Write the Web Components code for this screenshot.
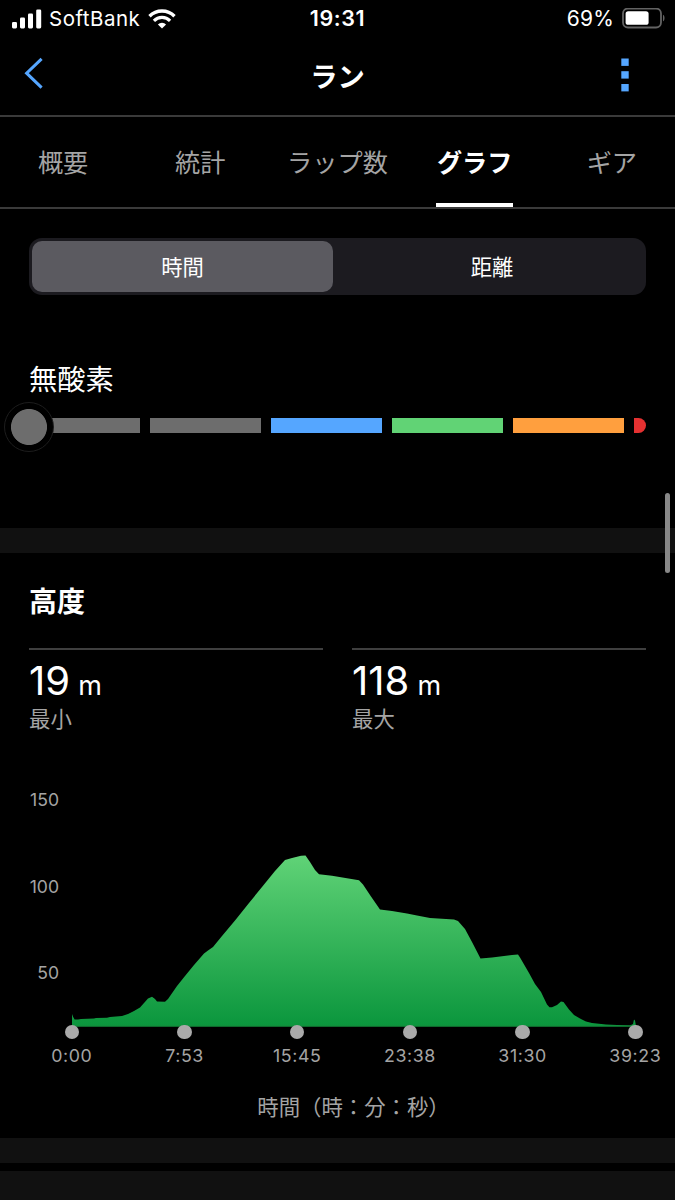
<!DOCTYPE html>
<html lang="ja">
<head>
<meta charset="utf-8">
<meta name="viewport" content="width=device-width, initial-scale=1">
<title>ラン</title>
<style>
  :root{
    --bg:#000;
    --text:#fff;
    --muted:#a4a4a4;
    --line:#3a3a3a;
    --band:#111;
    --accent:#55a6ff;
  }
  html,body{ margin:0; background:var(--bg); }
  body{
    width:675px; height:1200px; overflow:hidden; position:relative;
    color:var(--text);
    font-family:Inter, "Noto Sans CJK JP", sans-serif;
  }
</style>
</head>
<body>
  <run-screen>
    <status-bar carrier="SoftBank" time="19:31" battery="69"></status-bar>
    <nav-header>ラン</nav-header>
    <tab-bar>
      <tab-item>概要</tab-item>
      <tab-item>統計</tab-item>
      <tab-item>ラップ数</tab-item>
      <tab-item active>グラフ</tab-item>
      <tab-item>ギア</tab-item>
    </tab-bar>
    <segment-control>
      <segment-option selected>時間</segment-option>
      <segment-option>距離</segment-option>
    </segment-control>
    <effect-gauge>無酸素</effect-gauge>
    <section-band></section-band>
    <chart-section heading="高度">
      <stat-cell slot="stats" value="19" unit="m">最小</stat-cell>
      <stat-cell slot="stats" value="118" unit="m">最大</stat-cell>
      <elevation-chart>時間（時：分：秒）</elevation-chart>
    </chart-section>
    <section-band></section-band>
    <section-band class="next"></section-band>
  </run-screen>
  <scroll-thumb></scroll-thumb>

<script>
(function () {
  // small helper: register an element with an open shadow root
  function define(name, html, setup) {
    const tpl = document.createElement('template');
    tpl.innerHTML = html;
    customElements.define(name, class extends HTMLElement {
      constructor() {
        super();
        this.attachShadow({ mode: 'open' }).appendChild(tpl.content.cloneNode(true));
      }
      connectedCallback() {
        if (setup) setup(this, this.shadowRoot);
      }
    });
  }

  define('run-screen', `
    <style>
      :host{ display:flex; flex-direction:column; height:1200px; }
      ::slotted(*){ flex:none; }
      ::slotted(.next){ margin-top:8px; height:29px; }
    </style>
    <slot></slot>
  `);

  define('status-bar', `
    <style>
      :host{ display:grid; grid-template-columns:1fr auto 1fr; align-items:center; height:37px; font-size:20.5px; line-height:37px; }
      .left,.right{ display:flex; align-items:center; }
      .left{ padding-left:12px; }
      .right{ justify-content:flex-end; padding-right:10px; }
      .carrier{ margin:0 8px 0 7px; letter-spacing:.5px; }
      .time{ font-weight:600; font-size:21.5px; letter-spacing:.6px; }
      .pct{ margin-right:8px; font-size:21px; letter-spacing:.2px; }
      svg{ display:block; }
    </style>
    <div class="left">
      <svg width="30" height="20" viewBox="0 0 30 20" fill="#fff">
        <rect x="0" y="13" width="5" height="6.4" rx="1.3"/>
        <rect x="8" y="8.6" width="5" height="10.8" rx="1.3"/>
        <rect x="16" y="4.4" width="5" height="15" rx="1.3"/>
        <rect x="24.2" y="0.4" width="5" height="19" rx="1.3"/>
      </svg>
      <span class="carrier"></span>
      <svg width="28" height="20" viewBox="0 0 28 20" fill="none" stroke="#fff">
        <path d="M1.5 7.2a17.8 17.8 0 0 1 25 0" stroke-width="3.4"/>
        <path d="M5.9 11.8a11.5 11.5 0 0 1 16.2 0" stroke-width="3.2"/>
        <path d="M14 19.6l-4.1-4.1a5.8 5.8 0 0 1 8.2 0z" fill="#fff" stroke="none"/>
      </svg>
    </div>
    <div class="time"></div>
    <div class="right">
      <span class="pct"></span>
      <svg width="43" height="21" viewBox="0 0 43 21">
        <rect x="1" y="0.5" width="38" height="19" rx="5" fill="none" stroke="#636363" stroke-width="1.8"/>
        <rect x="3.6" y="3.2" width="23" height="13.6" rx="2.6" fill="#fff"/>
        <path d="M41 6.7c2 .7 2 5.9 0 6.6z" fill="#636363"/>
      </svg>
    </div>
  `, (el, r) => {
    r.querySelector('.carrier').textContent = el.getAttribute('carrier');
    r.querySelector('.time').textContent = el.getAttribute('time');
    r.querySelector('.pct').textContent = el.getAttribute('battery') + '%';
  });

  define('nav-header', `
    <style>
      :host{
        display:grid; grid-template-columns:1fr auto 1fr; align-items:center;
        height:78px; border-bottom:2px solid var(--line);
        font-size:27.3px; font-weight:700; line-height:78px;
      }
      svg{ display:block; }
      span{ padding-top:2px; height:76px; }
      .back{ margin:-6px 0 0 23px; }
      .more{ justify-self:end; margin-right:46.5px; margin-top:-2px; }
    </style>
    <svg class="back" width="20" height="32" viewBox="0 0 20 32">
      <path d="M18.6 1.8L3.6 16.2 18.6 30.6" fill="none" stroke="var(--accent)" stroke-width="3"/>
    </svg>
    <span><slot></slot></span>
    <svg class="more" width="8" height="34" viewBox="0 0 8 34" fill="var(--accent)">
      <rect x="0.3" y="0.5" width="7.4" height="7.4"/>
      <rect x="0.3" y="13.2" width="7.4" height="7.4"/>
      <rect x="0.3" y="26" width="7.4" height="7.4"/>
    </svg>
  `);

  define('tab-bar', `
    <style>
      :host{
        display:grid; grid-template-columns:repeat(5, 137.2px);
        height:90px; margin-left:-5.5px; border-bottom:2px solid var(--line);
      }
    </style>
    <slot></slot>
  `);

  define('tab-item', `
    <style>
      :host{ display:flex; justify-content:center; color:var(--muted); font-size:25.2px; line-height:93px; }
      span{ box-sizing:border-box; height:90px; white-space:nowrap; }
      :host([active]){ color:var(--text); font-weight:700; }
      :host([active]) span{ padding:0 .5px; background:linear-gradient(#fff,#fff) 0 86px / 100% 4px no-repeat; }
    </style>
    <span><slot></slot></span>
  `);

  define('segment-control', `
    <style>
      :host{
        display:grid; grid-template-columns:301px 1fr; box-sizing:border-box;
        height:57px; margin:29px 29px 0; padding:3px; border-radius:13px; background:#1c1b20;
      }
    </style>
    <slot></slot>
  `);

  define('segment-option', `
    <style>
      :host{ display:block; height:51px; border-radius:10px; text-align:center; font-size:21.3px; line-height:53px; padding-left:8px; }
      :host([selected]){ background:#5b5a60; padding-left:0; }
    </style>
    <slot></slot>
  `);

  define('effect-gauge', `
    <style>
      :host{ display:block; height:171px; margin:62px 29px 0; }
      .name{ font-size:28.3px; line-height:46px; }
      .track{ display:grid; grid-template-columns:repeat(5, 110.5px) 11.5px; column-gap:10.55px; height:15px; margin-top:15px; position:relative; }
      i{ background:#6d6d6d; }
      i:nth-child(3){ background:#55a6ff; }
      i:nth-child(4){ background:#61d375; }
      i:nth-child(5){ background:#ff9f3e; }
      i:nth-child(6){ background:#e53131; border-radius:0 8px 8px 0; }
      /* knob sits over the start of the track */
      .knob{
        position:absolute; left:-25.5px; top:-16px; box-sizing:border-box; width:50px; height:50px;
        border:1px solid #1d1d1d; border-radius:50%;
        background:radial-gradient(circle, #6d6d6d 17.6px, #000 18.4px);
      }
    </style>
    <div class="name"><slot></slot></div>
    <div class="track"><i></i><i></i><i></i><i></i><i></i><i></i><b class="knob"></b></div>
  `);

  define('section-band', `
    <style>
      :host{ display:block; height:25px; background:var(--band); }
    </style>
  `);

  define('chart-section', `
    <style>
      :host{ display:flex; flex-direction:column; height:585px; }
      h2{ margin:26px 29px 0; font-size:28px; line-height:46px; font-weight:700; }
      .stats{ display:grid; grid-template-columns:1fr 1fr; gap:29px; margin:23px 29px 0; height:152px; }
    </style>
    <h2></h2>
    <div class="stats"><slot name="stats"></slot></div>
    <slot></slot>
  `, (el, r) => {
    r.querySelector('h2').textContent = el.getAttribute('heading');
  });

  define('stat-cell', `
    <style>
      :host{ display:block; border-top:2px solid #3f3f3f; }
      .value{ font-size:40px; line-height:48px; margin-top:7px; white-space:pre; }
      .unit{ font-size:27px; margin-left:.7px; }
      .label{ color:var(--muted); font-size:21.4px; line-height:26px; margin-top:-4px; }
    </style>
    <div class="value"><span class="num"></span><span class="unit"></span></div>
    <div class="label"><slot></slot></div>
  `, (el, r) => {
    r.querySelector('.num').textContent = el.getAttribute('value');
    r.querySelector('.unit').textContent = ' ' + el.getAttribute('unit');
  });

  // elevation outline, x 0..564, y measured from the 150 m row
  const OUTLINE = [
    [0,214],[1.2,217],[2.6,219.5],[6,219.6],[9,219],[22,218.6],[24,218.1],[35,217.8],[38,217],[50,216],[56,214],[62,211],
    [68,207.5],[72,203],[76,198.5],[80,196.7],[83,199],[85,201.6],[93,201.7],[96,199],[105,186],
    [113,176],[122,165],[132,153.5],[136,150.5],[141,147],[150,136],[163,120.5],[177,103],[190,87],[203,71],
    [213,60],[220,58],[229,55.7],[233.5,55.5],[238,62],[243,70],[247,74.2],[260,75.7],[287,80.2],
    [291,84.5],[299,96.5],[308,109.5],[320,111],[335,113.5],[345,115.5],[358,118],[382,119.6],[386,121],
    [393,129],[400,142],[408.5,158.6],[420,157.5],[440,155],[446,154.5],[448,157.5],[457,173],
    [463,184],[469,192],[475,204.5],[477.5,207.2],[480,207.2],[485,205],[489,201.5],[491.5,202],
    [497,209.5],[502,215],[508,218.5],[514,221.5],[520,223],[534,224.4],[545,225],[558,225.4],
    [561,224],[562,219.5],[563,220.5],[564,226]
  ];

  define('elevation-chart', `
    <style>
      :host{ display:block; color:var(--muted); }
      .plot{ display:grid; grid-template-columns:59px 564px; column-gap:13px; height:227px; }
      .y{ display:flex; flex-direction:column; font-size:17.6px; line-height:86.5px; text-align:right; margin-top:-43px; }
      svg{ display:block; overflow:visible; }
      .x{ display:grid; grid-template-columns:repeat(6, 112.7px); margin-left:15.5px; font-size:17.8px; letter-spacing:.6px; }
      .x div{ display:flex; flex-direction:column; align-items:center; }
      .x i{ width:14.5px; height:14.5px; border-radius:50%; background:#aaa; margin-top:-2.5px; z-index:1; }
      .x span{ line-height:22px; margin-top:6px; }
      .title{ margin:23.5px 0 0 32px; text-align:center; font-size:21.4px; line-height:32px; }
    </style>
    <div class="plot">
      <div class="y"><span>150</span><span>100</span><span>50</span></div>
      <svg width="564" height="227" viewBox="0 0 564 227">
        <defs>
          <linearGradient id="fill" gradientUnits="userSpaceOnUse" x1="0" y1="55" x2="0" y2="226">
            <stop offset="0" stop-color="#60d377"/>
            <stop offset="1" stop-color="#0b963d"/>
          </linearGradient>
        </defs>
        <path fill="url(#fill)"/>
        <path d="M0 226H564" stroke="#178a3c"/>
      </svg>
    </div>
    <div class="x"></div>
    <div class="title"><slot></slot></div>
  `, (el, r) => {
    r.querySelector('path').setAttribute('d',
      'M0 226.5L' + OUTLINE.map(p => p.join(' ')).join('L') + 'V226.5Z');
    r.querySelector('.x').innerHTML = ['0:00', '7:53', '15:45', '23:38', '31:30', '39:23']
      .map(t => `<div><i></i><span>${t}</span></div>`).join('');
  });

  define('scroll-thumb', `
    <style>
      :host{ position:absolute; right:5px; top:493px; width:5.5px; height:80px; border-radius:3px; background:#888; }
    </style>
  `);
})();
</script>
</body>
</html>
